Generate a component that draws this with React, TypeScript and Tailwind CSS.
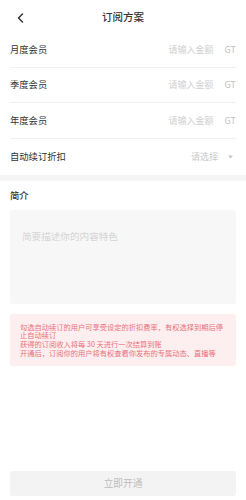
import React from 'react';

const rows = [
  { label: '月度会员', placeholder: '请输入金额', suffix: 'GT' },
  { label: '季度会员', placeholder: '请输入金额', suffix: 'GT' },
  { label: '年度会员', placeholder: '请输入金额', suffix: 'GT' },
];

export default function App() {
  return (
    <div
      className="flex h-[500px] w-[246px] flex-col bg-white text-[#333]"
      style={{ fontFamily: '"Noto Sans CJK SC", "Noto Sans", sans-serif' }}
    >
      {/* header */}
      <div className="relative flex h-[32px] items-center justify-center pt-[2px]">
        <svg
          className="absolute left-[17px] top-[13px]"
          width="7"
          height="10"
          viewBox="0 0 7 10"
          fill="none"
        >
          <path d="M5.5 1 L1.5 5 L5.5 9" stroke="#333" strokeWidth="1.5" strokeLinecap="round" strokeLinejoin="round" />
        </svg>
        <span className="text-[10.5px] font-medium leading-none">订阅方案</span>
      </div>

      {/* price rows */}
      <div className="px-[10px]">
        {rows.map((row) => (
          <div
            key={row.label}
            className="flex h-[35.5px] items-center justify-between border-b border-[#f0f0f0]"
          >
            <span className="text-[9.3px] leading-none">{row.label}</span>
            <div className="flex items-center">
              <span className="text-[9px] leading-none text-[#d0d0d0]">{row.placeholder}</span>
              <span className="ml-[11px] text-[9px] leading-none text-[#c4c4c4]">{row.suffix}</span>
            </div>
          </div>
        ))}
        <div className="flex h-[36px] items-center justify-between">
          <span className="text-[9.3px] leading-none">自动续订折扣</span>
          <div className="flex items-center">
            <span className="text-[9px] leading-none text-[#c8c8c8]">请选择</span>
            <svg className="ml-[10px] mr-[3px]" width="5" height="4" viewBox="0 0 5 4">
              <path d="M0 0.5 H5 L2.5 3.5 Z" fill="#c4c4c4" />
            </svg>
          </div>
        </div>
      </div>

      <div className="h-[6px] bg-[#f5f5f5]" />

      {/* intro */}
      <div className="px-[10px]">
        <div className="flex h-[29px] items-center pt-[2px]">
          <span className="text-[9.3px] font-medium leading-none">简介</span>
        </div>
        <div className="h-[94px] rounded-[3px] bg-[#f7f7f7] px-[12px] pt-[11px]">
          <span className="text-[9.6px] leading-none text-[#d4d4d4]">简要描述你的内容特色</span>
        </div>

        <div className="mt-[10px] rounded-[3px] bg-[#fdeef0] px-[10px] py-[9px] text-[7.25px] leading-[8.7px] text-[#e8737c]">
          <p>勾选自动续订的用户可享受设定的折扣费率，有权选择到期后停止自动续订</p>
          <p>获得的订阅收入将每 30 天进行一次结算到账</p>
          <p>开通后，订阅你的用户将有权查看你发布的专属动态、直播等</p>
        </div>
      </div>

      {/* button */}
      <div className="mt-auto px-[10px] pb-[4px]">
        <div className="flex h-[25px] items-center justify-center rounded-[3px] bg-[#f3f3f3]">
          <span className="text-[9.7px] leading-none text-[#bdbdbd]">立即开通</span>
        </div>
      </div>
    </div>
  );
}
